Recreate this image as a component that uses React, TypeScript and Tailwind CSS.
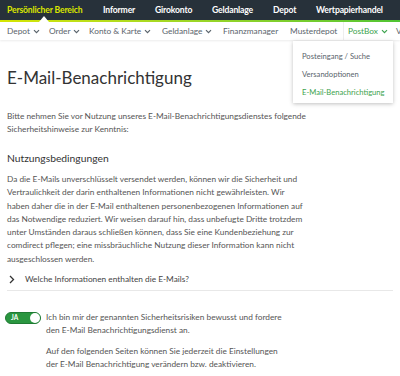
import React from "react";

const Chev = ({ className = "" }: { className?: string }) => (
  <svg width="7" height="5" viewBox="0 0 7 5" className={className}>
    <path d="M1 1.2 L3.5 3.7 L6 1.2" fill="none" stroke="currentColor" strokeWidth="1.2" />
  </svg>
);

export default function App() {
  const font = { fontFamily: "Lato, 'Open Sans', sans-serif" };
  return (
    <div className="w-[400px] h-[376px] bg-white overflow-hidden relative text-[#444]" style={font}>
      {/* top nav */}
      <div className="h-[20px] bg-[#27313a] flex items-center text-[8.6px] font-bold tracking-[-0.15px] text-white whitespace-nowrap pl-[7px]">
        <span className="w-[96px] shrink-0 text-[#dbe600]">Persönlicher Bereich</span>
        <span className="w-[52px] shrink-0">Informer</span>
        <span className="w-[57px] shrink-0">Girokonto</span>
        <span className="w-[61px] shrink-0">Geldanlage</span>
        <span className="w-[43px] shrink-0">Depot</span>
        <span className="shrink-0">Wertpapierhandel</span>
      </div>
      <div className="h-[2px] bg-gradient-to-r from-[#d6e600] to-[#4fc433] relative">
        <div className="absolute left-[39px] top-[-4px] w-0 h-0 border-l-[5px] border-r-[5px] border-b-[6px] border-l-transparent border-r-transparent border-b-white" />
      </div>
      {/* sub nav */}
      <div className="h-[18px] bg-white flex items-center text-[8.3px] text-[#5a646c] whitespace-nowrap shadow-[0_1px_2px_rgba(0,0,0,0.08)] pl-[7px]">
        <span className="w-[42px] shrink-0 flex items-center gap-[3px]">Depot <Chev /></span>
        <span className="w-[40px] shrink-0 flex items-center gap-[3px]">Order <Chev /></span>
        <span className="w-[73px] shrink-0 flex items-center gap-[3px]">Konto &amp; Karte <Chev /></span>
        <span className="w-[61px] shrink-0 flex items-center gap-[3px]">Geldanlage <Chev /></span>
        <span className="w-[67px] shrink-0">Finanzmanager</span>
        <span className="w-[53px] shrink-0">Musterdepot</span>
        <span className="w-[53px] shrink-0 pl-[4px] h-full flex items-center gap-[3px] text-[#3da34e] border-l border-[#eeeeee]">PostBox <Chev /></span>
        <span className="shrink-0">V</span>
      </div>
      {/* dropdown */}
      <div className="absolute left-[293px] top-[41px] w-[100px] h-[62px] bg-white shadow-[0_1px_4px_rgba(0,0,0,0.25)] text-[7.6px] text-[#5a646c] flex flex-col pl-[9px] pt-[10px] gap-[8px] z-10 whitespace-nowrap">
        <span className="leading-[10px]">Posteingang / Suche</span>
        <span className="leading-[10px]">Versandoptionen</span>
        <span className="leading-[10px] text-[#3da34e]">E-Mail-Benachrichtigung</span>
      </div>

      <div className="px-[7px]">
        <h1 className="mt-[27px] text-[17px] leading-[22px] text-[#333]">E-Mail-Benachrichtigung</h1>
        <p className="mt-[21px] text-[8.3px] leading-[13px] text-[#555]">
          Bitte nehmen Sie vor Nutzung unseres E-Mail-Benachrichtigungsdienstes folgende
          <br />
          Sicherheitshinweise zur Kenntnis:
        </p>
        <h2 className="mt-[15px] text-[10.3px] leading-[14px] text-[#333]">Nutzungsbedingungen</h2>
        <p className="mt-[8px] text-[8.3px] leading-[13.3px] text-[#555]">
          Da die E-Mails unverschlüsselt versendet werden, können wir die Sicherheit und
          <br />
          Vertraulichkeit der darin enthaltenen Informationen nicht gewährleisten. Wir
          <br />
          haben daher die in der E-Mail enthaltenen personenbezogenen Informationen auf
          <br />
          das Notwendige reduziert. Wir weisen darauf hin, dass unbefugte Dritte trotzdem
          <br />
          unter Umständen daraus schließen können, dass Sie eine Kundenbeziehung zur
          <br />
          comdirect pflegen; eine missbräuchliche Nutzung dieser Information kann nicht
          <br />
          ausgeschlossen werden.
        </p>
        <div className="mt-[7px] flex items-center h-[13px] pb-[4px] border-b border-[#e8e8e8] box-content">
          <svg width="6" height="9" viewBox="0 0 6 9" className="ml-[2px] text-[#333]">
            <path d="M1 1 L4.5 4.5 L1 8" fill="none" stroke="currentColor" strokeWidth="1.3" />
          </svg>
          <span className="ml-[10px] text-[8.3px] text-[#444]">Welche Informationen enthalten die E-Mails?</span>
        </div>
        <div className="mt-[20px] flex items-start">
          <div className="mt-[1px] -ml-[2px] w-[36px] h-[12px] rounded-full bg-[#2a9640] border border-[#1f7a33] relative flex items-center shrink-0">
            <span className="ml-[5px] text-[6.5px] font-bold text-white">JA</span>
            <span className="absolute right-[0px] top-[0px] w-[10px] h-[10px] rounded-full bg-white" />
          </div>
          <div className="ml-[5px] text-[8.3px] leading-[13px] text-[#555]">
            <p>
              Ich bin mir der genannten Sicherheitsrisiken bewusst und fordere
              <br />
              den E-Mail Benachrichtigungsdienst an.
            </p>
            <p className="mt-[8px]">
              Auf den folgenden Seiten können Sie jederzeit die Einstellungen
              <br />
              der E-Mail Benachrichtigung verändern bzw. deaktivieren.
            </p>
          </div>
        </div>
      </div>
    </div>
  );
}
